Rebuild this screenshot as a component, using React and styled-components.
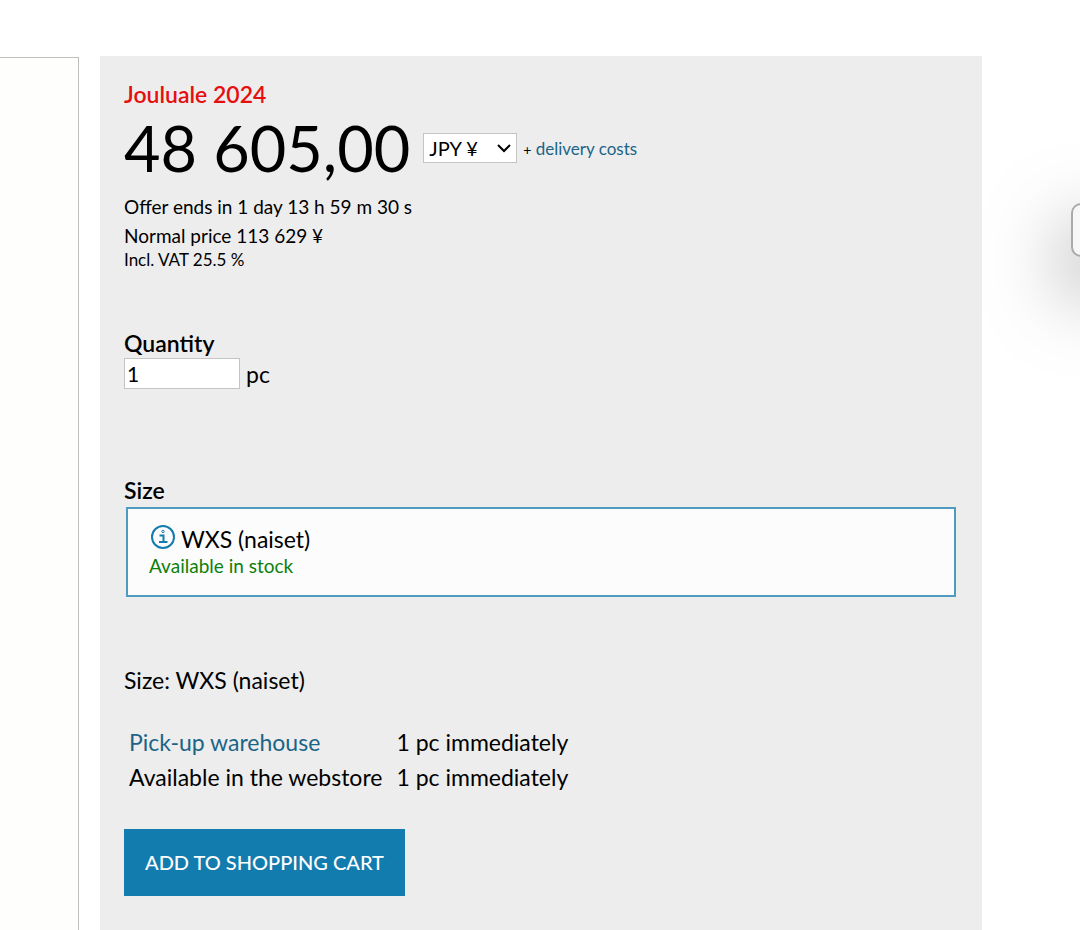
import React, { useState } from 'react';
import styled, { createGlobalStyle } from 'styled-components';


const GlobalStyle = createGlobalStyle`
    * {
        box-sizing: border-box;
    }

    body {
        margin: 0;
        background: #ffffff;
        color: #000000;
        font-family: Lato, "Liberation Sans", sans-serif;
        font-size: 23px;
        line-height: 30px;
    }
`

const Page = styled.main`
    min-height: 100vh;
    display: flex;
    padding: 56px 98px 0 0;
    overflow: hidden;
`

const Gallery = styled.div`
    flex: 0 0 79px;
    margin: 1px 21px 0 0;
    border: 1px solid #bfbfbf;
    border-width: 1px 1px 0 0;
    background: #fefefc;
`

const Panel = styled.section`
    flex: 1;
    padding: 23px 24px 34px;
    background: #ededed;
`

const Campaign = styled.div`
    color: #e60f0f;
    font-weight: 600;
`

const PriceRow = styled.div`
    display: flex;
    align-items: center;
    height: 78px;
`

const Price = styled.span`
    margin-right: 13px;
    font-size: 63px;
    line-height: 78px;
`

const SelectWrap = styled.span`
    position: relative;
    margin-right: 6px;

    svg {
        position: absolute;
        top: 10px;
        right: 6px;
        pointer-events: none;
    }
`

const Currency = styled.select`
    display: block;
    width: 94px;
    height: 30px;
    padding: 0 5px;
    appearance: none;
    border: 1px solid #c4c4c4;
    border-radius: 0;
    background: #ffffff;
    color: #000000;
    font-family: inherit;
    font-size: 20px;
`

const Delivery = styled.span`
    padding-top: 2px;
    font-size: 17px;
`

const Plus = styled.span`
    font-size: 14px;
`

const Link = styled.a`
    color: #1b6488;
    text-decoration: none;
`

const Offer = styled.div`
    padding-top: 5px;
    font-size: 19px;
    line-height: 29px;
`

const Vat = styled.div`
    font-size: 17px;
    line-height: 20px;
`

const Quantity = styled.div`
    padding-top: 58px;
`

const Label = styled.label`
    display: block;
    font-weight: 600;
`

const QuantityRow = styled.div`
    display: flex;
    align-items: center;
    gap: 6px;
`

const QuantityInput = styled.input`
    width: 116px;
    height: 31px;
    padding: 2px;
    border: 1px solid #c4c4c4;
    background: #ffffff;
    color: #000000;
    font-family: inherit;
    font-size: 21px;
`

const Sizes = styled.div`
    padding-top: 86px;
`

const Heading = styled.h2`
    margin: 0;
    font-size: 23px;
    font-weight: 600;
`

const SizeButton = styled.button`
    display: block;
    width: calc(100% - 4px);
    height: 90px;
    margin: 2px 2px 0;
    padding: 0 21px 2px;
    border: 2px solid #4f9abf;
    background: #fcfcfc;
    color: #000000;
    font-family: inherit;
    font-size: 23px;
    line-height: 30px;
    text-align: left;
`

const SizeName = styled.span`
    display: flex;
    align-items: flex-start;
    gap: 6px;

    svg {
        margin: 1px 0 0 2px;
    }
`

const Stock = styled.span`
    display: block;
    color: #0b800b;
    font-size: 19px;
    line-height: 24px;
`

const Selected = styled.div`
    padding-top: 68px;
`

const Availability = styled.table`
    margin: 28px 0 34px;
    border-spacing: 2px;

    td, th {
        padding: 2px 9px 1px 3px;
        font-weight: 400;
        text-align: left;
    }
`

const CartButton = styled.button`
    padding: 18px 21px 19px;
    border: 0;
    background: #127cae;
    color: #ffffff;
    font-family: inherit;
    font-size: 20px;
    font-weight: 500;
    line-height: 30px;
    text-transform: uppercase;
`

const SideTab = styled.div`
    position: fixed;
    top: 203px;
    right: -44px;
    width: 53px;
    height: 54px;
    border: 2px solid #aaaaaa;
    border-radius: 10px;
    background: #f7f7f7;
    box-shadow: 0 30px 80px rgba(0, 0, 0, 0.5);
`

const InfoIcon = () => (
    <svg width="24" height="24" viewBox="0 0 24 24" fill="none" stroke="#127cae" aria-hidden="true">
        <circle cx="12" cy="12" r="11" strokeWidth="2" />
        <circle cx="12" cy="6.5" r="1.2" strokeWidth="1" />
        <path d="M8.5 10.5h4v6M8 17h8.5" strokeWidth="2" />
    </svg>
)

const Chevron = () => (
    <svg width="14" height="10" viewBox="0 0 14 10" fill="none" stroke="#000000" strokeWidth="2" aria-hidden="true">
        <path d="M1 2l6 6 6-6" />
    </svg>
)

export default function App() {
    const [quantity, setQuantity] = useState("1");

    return (
        <Page>
            <GlobalStyle />
            <Gallery />
            <Panel>
                <Campaign>Jouluale 2024</Campaign>
                <PriceRow>
                    <Price>48 605,00</Price>
                    <SelectWrap>
                        <Currency aria-label="Currency" defaultValue="JPY">
                            <option value="JPY">JPY ¥</option>
                        </Currency>
                        <Chevron />
                    </SelectWrap>
                    <Delivery><Plus>+</Plus> <Link href="#delivery">delivery costs</Link></Delivery>
                </PriceRow>
                <Offer>
                    <div>Offer ends in 1 day 13 h 59 m 30 s</div>
                    <div>Normal price 113 629 ¥</div>
                </Offer>
                <Vat>Incl. VAT 25.5 %</Vat>
                <Quantity>
                    <Label htmlFor="quantity">Quantity</Label>
                    <QuantityRow>
                        <QuantityInput id="quantity" value={quantity} onChange={e => setQuantity(e.target.value)} />
                        <span>pc</span>
                    </QuantityRow>
                </Quantity>
                <Sizes>
                    <Heading>Size</Heading>
                    <SizeButton type="button">
                        <SizeName><InfoIcon />WXS (naiset)</SizeName>
                        <Stock>Available in stock</Stock>
                    </SizeButton>
                </Sizes>
                <Selected>Size: WXS (naiset)</Selected>
                <Availability>
                    <tbody>
                        <tr>
                            <th scope="row"><Link href="#warehouse">Pick-up warehouse</Link></th>
                            <td>1 pc immediately</td>
                        </tr>
                        <tr>
                            <th scope="row">Available in the webstore</th>
                            <td>1 pc immediately</td>
                        </tr>
                    </tbody>
                </Availability>
                <CartButton type="button">Add to shopping cart</CartButton>
            </Panel>
            <SideTab />
        </Page>
    )
}
